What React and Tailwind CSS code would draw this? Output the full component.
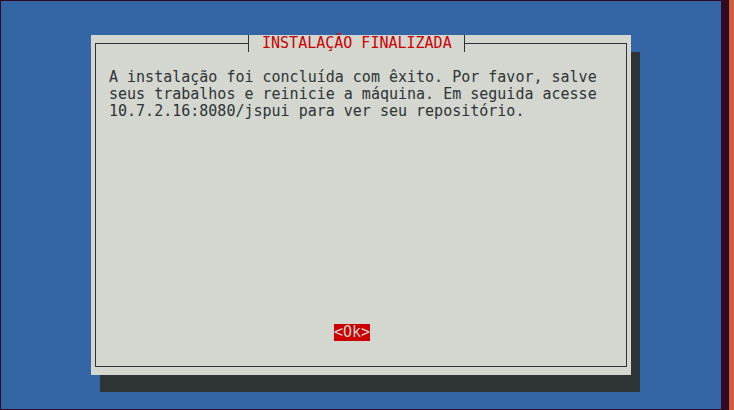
export default function App() {
  const font = { fontFamily: '"DejaVu Sans Mono", "Liberation Mono", monospace' };
  return (
    <div className="w-[734px] h-[410px] bg-[#300a24] flex" style={font}>
      <div className="w-[729px] h-full pt-px pl-px">
        <div className="w-[720px] h-[408px] bg-[#3465a4] pl-[90px] pt-[34px]">
          <div className="relative w-[540px] h-[340px] bg-[#d3d7cf] shadow-[9px_17px_0_0_#2e3436] px-[4px] py-[8px]">
            <div className="h-full border border-[#2e3436] flex flex-col">
              <div className="pl-[13px] pt-[25px] text-[15px] leading-[17px] text-[#2e3436] whitespace-pre">
                <div>A instalação foi concluída com êxito. Por favor, salve</div>
                <div>seus trabalhos e reinicie a máquina. Em seguida acesse</div>
                <div>10.7.2.16:8080/jspui para ver seu repositório.</div>
              </div>
              <div className="mt-auto mb-[25px] pl-[238px] flex">
                <div className="w-[36px] h-[17px] bg-[#cc0000] text-[#d3d7cf] text-[15px] leading-[17px] whitespace-pre">
                  {"<Ok>"}
                </div>
              </div>
            </div>
            <div className="absolute top-0 left-[153px] h-[17px] flex bg-[#d3d7cf]">
              <div className="relative w-[9px] h-[17px]">
                <span className="absolute left-[4px] top-0 w-px h-full bg-[#2e3436]" />
                <span className="absolute left-0 top-[8px] w-[5px] h-px bg-[#2e3436]" />
              </div>
              <div className="w-[207px] h-[17px] text-[15px] leading-[17px] text-[#cc0000] whitespace-pre">
                {" INSTALAÇÃO FINALIZADA "}
              </div>
              <div className="relative w-[9px] h-[17px]">
                <span className="absolute left-[4px] top-0 w-px h-full bg-[#2e3436]" />
                <span className="absolute left-[4px] top-[8px] w-[5px] h-px bg-[#2e3436]" />
              </div>
            </div>
          </div>
        </div>
      </div>
      <div className="w-[5px] h-full bg-[#cf5f3c]" />
    </div>
  );
}
